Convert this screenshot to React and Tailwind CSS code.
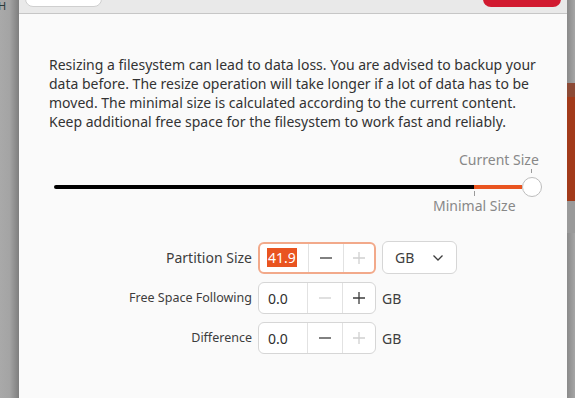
import React from "react";

const font = { fontFamily: '"Noto Sans", "Open Sans", sans-serif' };

function Minus({ disabled }) {
  return (
    <svg width="14" height="14" viewBox="0 0 14 14">
      <path d="M1 7h12" stroke={disabled ? "#d0d0d0" : "#3d3d3d"} strokeWidth="1.3" />
    </svg>
  );
}
function Plus({ disabled }) {
  return (
    <svg width="14" height="14" viewBox="0 0 14 14">
      <path d="M1 7h12M7 1v12" stroke={disabled ? "#d0d0d0" : "#3d3d3d"} strokeWidth="1.3" />
    </svg>
  );
}

function Spin({ value, focused, minusDisabled, plusDisabled }) {
  return (
    <div
      className={
        "flex h-[32px] w-[118px] items-stretch rounded-[6px] bg-white " +
        (focused ? "border-2 border-[#f2a98a]" : "border border-[#d6d6d6]")
      }
    >
      <div className="flex w-[48px] items-center pl-[7px]">
        {focused ? (
          <span className="bg-[#e95420] px-[1px] text-[14px] leading-[19px] text-white">{value}</span>
        ) : (
          <span className="pl-[2px] text-[14px] text-[#2e2e2e]">{value}</span>
        )}
      </div>
      <div className="flex w-[35px] items-center justify-center border-l border-[#e2e2e2]">
        <Minus disabled={minusDisabled} />
      </div>
      <div className="flex flex-1 items-center justify-center border-l border-[#e2e2e2]">
        <Plus disabled={plusDisabled} />
      </div>
    </div>
  );
}

export default function App() {
  return (
    <div className="flex h-[398px] w-[575px] overflow-hidden bg-[#a8a8a8]" style={font}>
      {/* left background strip */}
      <div className="relative w-[19px] shrink-0 bg-gradient-to-r from-[#a9a9a9] via-[#a4a4a4] to-[#7e7e7e]">
        <span className="absolute left-[-2px] top-[0px] text-[11px] leading-[12px] text-[#2b3a3a]">H</span>
      </div>

      {/* dialog */}
      <div className="flex w-[548px] shrink-0 flex-col bg-[#fafafa] text-[#3d3d3d]">
        <div className="flex h-[14px] shrink-0 items-end justify-between border-b border-[#c6c6c6] bg-[#e9e9e9] px-[6px] pb-[6px]">
          <div className="h-[30px] w-[77px] rounded-[8px] border border-[#cfcfcf] bg-white" />
          <div className="h-[30px] w-[78px] rounded-[8px] bg-[#d11a30]" />
        </div>

        <div className="pl-[30px] pt-[41px] text-[14px] leading-[19px] text-[#333333]">
          <p className="whitespace-nowrap">
            Resizing a filesystem can lead to data loss. You are advised to backup your
            <br />
            data before. The resize operation will take longer if a lot of data has to be
            <br />
            moved. The minimal size is calculated according to the current content.
            <br />
            Keep additional free space for the filesystem to work fast and reliably.
          </p>
        </div>

        {/* slider */}
        <div className="relative mt-[21px] h-[62px] pl-[35px]">
          <div className="absolute left-[440px] top-[0px] text-[14px] leading-[16px] text-[#888888]">Current Size</div>
          <div className="absolute left-[512px] top-[17px] h-[4px] w-[1px] bg-[#9a9a9a]" />
          <div className="flex items-center pt-[25px]">
            <div className="h-[4px] w-[420px] rounded-l-full bg-black" />
            <div className="h-[4px] w-[48px] bg-[#e95420]" />
            <div className="h-[20px] w-[20px] rounded-full border border-[#bdbdbd] bg-white" />
          </div>
          <div className="absolute left-[455px] top-[39px] h-[5px] w-[1px] bg-[#9a9a9a]" />
          <div className="absolute left-[414px] top-[46px] text-[14px] leading-[16px] text-[#888888]">Minimal Size</div>
        </div>

        {/* form */}
        <div className="mt-[27px] grid w-fit grid-cols-[233px_118px_auto] items-center gap-x-[6px] gap-y-[8px]">
          <div className="text-right text-[14px] text-[#3d3d3d]">Partition Size</div>
          <Spin value="41.9" focused plusDisabled />
          <div className="flex h-[33px] w-[75px] items-center justify-between rounded-[6px] border border-[#d6d6d6] bg-white pl-[12px] pr-[12px] text-[14px]">
            <span>GB</span>
            <svg width="12" height="8" viewBox="0 0 12 8">
              <path d="M1.5 1.5l4.5 4.5 4.5-4.5" fill="none" stroke="#3d3d3d" strokeWidth="1.3" />
            </svg>
          </div>

          <div className="text-right text-[12.5px] text-[#3d3d3d]">Free Space Following</div>
          <Spin value="0.0" minusDisabled />
          <div className="text-[14px]">GB</div>

          <div className="text-right text-[12.5px] text-[#3d3d3d]">Difference</div>
          <Spin value="0.0" plusDisabled />
          <div className="text-[14px]">GB</div>
        </div>
      </div>

      {/* right background strip */}
      <div className="flex w-[8px] shrink-0 flex-col bg-gradient-to-r from-[#8a8a8a] to-[#a6a6a6]">
        <div className="h-[83px]" />
        <div className="h-[14px] bg-[#8c4a35]" />
        <div className="h-[104px] bg-[#a23a1a]" />
        <div className="h-[32px] bg-[#9a9a9a]" />
      </div>
    </div>
  );
}
